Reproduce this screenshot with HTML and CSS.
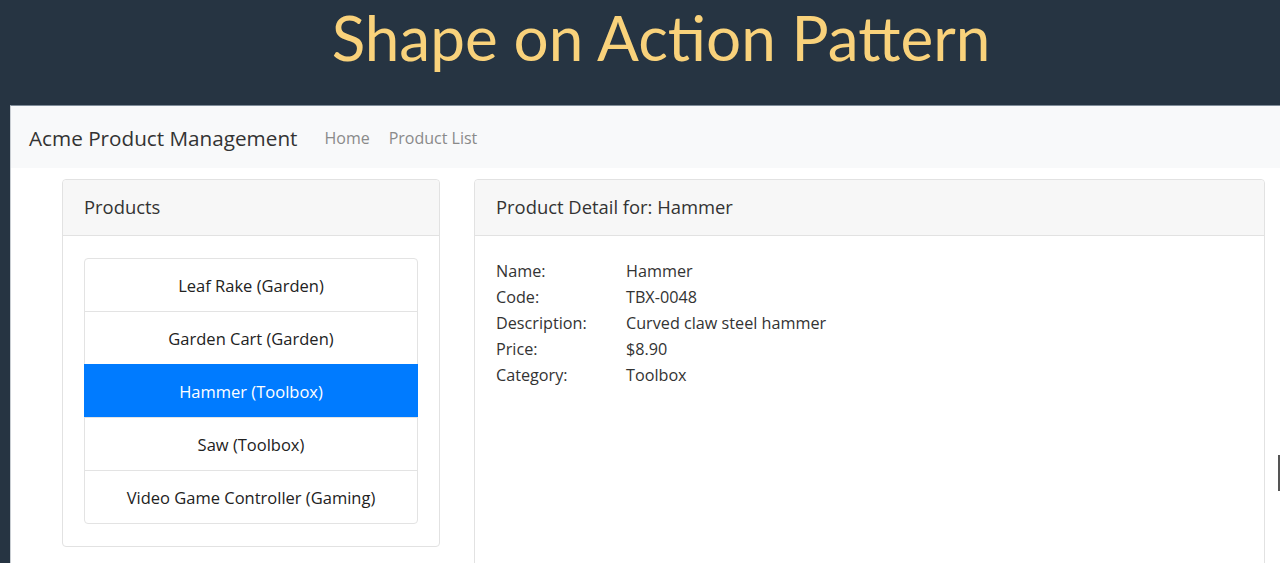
FILE: index.html
```html
<!DOCTYPE html>
<html lang="en">
<head>
<meta charset="utf-8">
<title>Shape on Action Pattern</title>
<link rel="stylesheet" href="styles.css">
</head>
<body>
<header class="slide-title">Shape on Action Pattern</header>
<div class="browser">
  <nav class="navbar">
    <span class="brand">Acme Product Management</span>
    <a class="nav-link">Home</a>
    <a class="nav-link">Product List</a>
  </nav>
  <main class="main">
    <section class="card card-list">
      <div class="card-header">Products</div>
      <div class="card-body">
        <ul class="list-group">
          <li class="list-item">Leaf Rake (Garden)</li>
          <li class="list-item">Garden Cart (Garden)</li>
          <li class="list-item active">Hammer (Toolbox)</li>
          <li class="list-item">Saw (Toolbox)</li>
          <li class="list-item">Video Game Controller (Gaming)</li>
        </ul>
      </div>
    </section>
    <section class="card card-detail">
      <div class="card-header">Product Detail for: Hammer</div>
      <div class="card-body">
        <div class="detail-row"><span class="label">Name:</span><span>Hammer</span></div>
        <div class="detail-row"><span class="label">Code:</span><span>TBX-0048</span></div>
        <div class="detail-row"><span class="label">Description:</span><span>Curved claw steel hammer</span></div>
        <div class="detail-row"><span class="label">Price:</span><span>$8.90</span></div>
        <div class="detail-row"><span class="label">Category:</span><span>Toolbox</span></div>
      </div>
    </section>
  </main>
  <div class="scroll-mark"></div>
</div>
</body>
</html>
```

FILE: styles.css
```css
html, body {
  margin: 0;
  height: 100%;
  overflow: hidden;
}
body {
  background: #263442;
  font-family: "Open Sans", "Liberation Sans", sans-serif;
  color: #333;
}
.slide-title {
  height: 105px;
  box-sizing: border-box;
  text-align: center;
  font-family: Lato, "Open Sans", sans-serif;
  font-size: 62px;
  line-height: 74px;
  color: #f9d27b;
  padding-left: 42px;
}
.browser {
  position: relative;
  margin-left: 10px;
  height: 458px;
  background: #fff;
  border-top: 1px solid #7f8c99;
  border-left: 1px solid #c9ced3;
  box-sizing: border-box;
}
.navbar {
  height: 62px;
  box-sizing: border-box;
  padding: 2px 18px 0;
  background: #f8f9fa;
  display: flex;
  align-items: center;
}
.brand {
  font-size: 20.7px;
  color: #333;
  margin-right: 27px;
}
.nav-link {
  font-size: 16px;
  color: #8a8a8a;
  margin-right: 19px;
}
.main {
  display: flex;
  align-items: flex-start;
  gap: 34px;
  padding: 11px 15px 0 51px;
}
.card {
  border: 1px solid #e2e2e2;
  border-radius: 4px;
  background: #fff;
  box-sizing: border-box;
}
.card-list {
  width: 378px;
  flex: none;
}
.card-detail {
  flex: 1;
  height: 400px;
}
.card-header {
  height: 56px;
  box-sizing: border-box;
  background: #f7f7f7;
  border-bottom: 1px solid #e2e2e2;
  padding: 0 21px;
  font-size: 18.4px;
  line-height: 54px;
  color: #333;
  border-radius: 4px 4px 0 0;
}
.card-body {
  padding: 22px 21px 22px 21px;
}
.list-group {
  list-style: none;
  margin: 0;
  padding: 0;
}
.list-item {
  border: 1px solid #e3e3e3;
  margin-bottom: -1px;
  height: 54px;
  box-sizing: border-box;
  line-height: 54px;
  text-align: center;
  font-size: 16.5px;
  color: #222;
}
.list-item:first-child {
  border-radius: 4px 4px 0 0;
}
.list-item:last-child {
  border-radius: 0 0 4px 4px;
  margin-bottom: 0;
}
.list-item.active {
  background: #007bff;
  border-color: #007bff;
  color: #fff;
}
.detail-row {
  display: flex;
  font-size: 16.2px;
  line-height: 26px;
  color: #333;
}
.label {
  width: 130px;
  flex: none;
}
.scroll-mark {
  position: absolute;
  right: 0;
  top: 349px;
  width: 2px;
  height: 36px;
  background: #555;
}
```
